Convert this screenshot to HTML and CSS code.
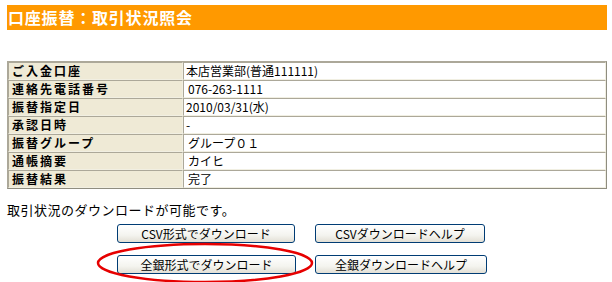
FILE: index.html
```html
<!DOCTYPE html>
<html lang="ja">
<head>
    <meta charset="UTF-8">
    <title>口座振替：取引状況照会</title>
    <link rel="stylesheet" href="styles.css">
</head>
<body>
<div class="page">
    <div class="page-title">口座振替：取引状況照会</div>

    <!-- 取引状況 -->
    <table class="status-table">
        <tr><th>ご入金口座</th><td>本店営業部(普通111111)</td></tr>
        <tr><th>連絡先電話番号</th><td class="num">076-263-1111</td></tr>
        <tr><th>振替指定日</th><td>2010/03/31(水)</td></tr>
        <tr><th>承認日時</th><td>-</td></tr>
        <tr><th>振替グループ</th><td class="num">グループ０１</td></tr>
        <tr><th>通帳摘要</th><td class="num">カイヒ</td></tr>
        <tr><th>振替結果</th><td class="num">完了</td></tr>
    </table>

    <p class="download-note">取引状況のダウンロードが可能です。</p>

    <div class="download-buttons">
        <button class="btn btn-csv">CSV形式でダウンロード</button>
        <button class="btn btn-csv-help">CSVダウンロードヘルプ</button>
        <button class="btn btn-zengin">全銀形式でダウンロード</button>
        <button class="btn btn-zengin-help">全銀ダウンロードヘルプ</button>
    </div>

    <!-- 赤丸 -->
    <svg class="mark" width="612" height="282" viewBox="0 0 612 282">
        <ellipse cx="205" cy="263" rx="107" ry="19" fill="none" stroke="#e60000" stroke-width="2.5"/>
    </svg>
</div>
</body>
</html>
```

FILE: styles.css
```css
html, body, div, p, table, th, td {
    margin: 0px;
    padding: 0px;
}

body {
    background: #ffffff;
    font-family: "Noto Sans CJK JP", "Liberation Sans", sans-serif;
    font-size: 12px;
    color: #000000;
}

.page {
    position: relative;
    width: 612px;
    height: 282px;
    overflow: hidden;
    padding: 5px 0px 0px 7px;
    box-sizing: border-box;
}

.page-title {
    width: 600px;
    height: 25px;
    line-height: 25px;
    background: #ff9900;
    color: #ffffff;
    font-size: 16px;
    font-weight: bold;
    letter-spacing: 0.8px;
    padding-left: 1px;
    box-sizing: border-box;
}

.status-table {
    width: 600px;
    margin-top: 31px;
    border-collapse: separate;
    border-spacing: 0px;
    border: 1px solid;
    border-color: #aca899 #8f8d80 #8f8d80 #aca899;
}

.status-table th,
.status-table td {
    height: 16px;
    line-height: 16px;
    border: 1px solid;
    border-color: #aca899 #f1efe2 #f1efe2 #aca899;
    text-align: left;
    vertical-align: middle;
    white-space: nowrap;
}

.status-table th {
    width: 170px;
    background: #efead6;
    font-weight: bold;
    letter-spacing: 2px;
    padding-left: 3px;
}

.status-table td {
    padding-left: 2px;
    background: #ffffff;
}

.status-table td.num {
    padding-left: 4px;
}

.download-note {
    margin-top: 13px;
    line-height: 16px;
    font-size: 13px;
    letter-spacing: 0.5px;
}

.download-buttons {
    display: grid;
    grid-template-columns: 179px 172px;
    column-gap: 19px;
    row-gap: 12px;
    margin: 6px 0px 0px 110px;
}

.btn {
    height: 19px;
    padding: 0px;
    border: 1px solid #003c74;
    border-radius: 3px;
    background: linear-gradient(#ffffff, #f4f4ef 60%, #e2dfd5);
    font-family: "Noto Sans CJK JP", "Liberation Sans", sans-serif;
    font-size: 12px;
    font-weight: normal;
    line-height: 17px;
    color: #000000;
    justify-self: start;
}

.btn-csv { width: 178px; }
.btn-csv-help { width: 170px; }
.btn-zengin { width: 179px; }
.btn-zengin-help { width: 172px; }

.mark {
    position: absolute;
    left: 0px;
    top: 0px;
    pointer-events: none;
}
```
